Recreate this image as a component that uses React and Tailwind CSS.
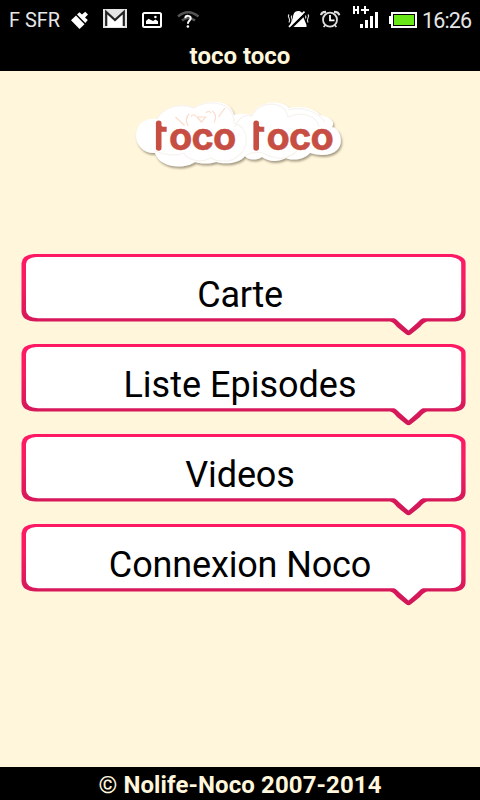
import React from "react";

function StatusBar() {
  return (
    <div className="relative h-10 w-full bg-black text-white">
      <svg className="block" width="480" height="40" viewBox="0 0 480 40" fill="none">
        <g fill="#e6e6e6" fontFamily="Roboto, sans-serif" fontSize="20">
          <text x="9" y="27" fontSize="19.5" textLength="51" lengthAdjust="spacingAndGlyphs">F SFR</text>
          <text x="422" y="28" fontSize="21.5" textLength="50">16:26</text>
        </g>
        {/* cleaning brush */}
        <g fill="#fff">
          <path d="M71 20.2 76 15.5 84.5 24.2 79.5 29Z" />
          <path d="M77 14.5 79.5 12.2 82 14.6 85.2 11.8 88 14.4 85 17.6 87.8 20 85.3 23Z" />
        </g>
        {/* mail */}
        <rect x="103" y="9" width="24" height="19" fill="#e4e4e4" />
        <path d="M107 12.5V27H123V12.5L115 21Z" fill="#fff" />
        <path d="M106.2 26V12L115 20 123.8 12V26" stroke="#222" strokeWidth="2.2" />
        {/* picture */}
        <rect x="143" y="13" width="18" height="14" rx="1.5" stroke="#fff" strokeWidth="2" />
        <path d="M146 24V21L148.5 18.8 151 20 153 21 155.5 19.5 158 21.2V24Z" fill="#fff" />
        <circle cx="155.4" cy="17" r="1.3" fill="#fff" />
        {/* wifi with question mark */}
        <g stroke="#555" strokeWidth="2.6">
          <path d="M178 16.5Q188 8 198.5 16.5" />
          <path d="M182 20.5Q188 15.5 195 20.5" />
        </g>
        <path d="M185.3 18.2C185.5 15 190.8 15.2 190.7 18.2C190.7 20.5 187.8 20.6 187.9 23.8" stroke="#fff" strokeWidth="2" />
        <circle cx="187.9" cy="26.5" r="1.3" fill="#fff" />
        {/* muted bell */}
        <path d="M298 11C301.5 11 303.3 13.5 303.5 17.5L306.5 25V27H290V25L292.8 18.5C293 14 294.5 11 298 11Z" fill="#fff" />
        <path d="M290.5 28 306.5 12.5" stroke="#000" strokeWidth="2.6" />
        <path d="M289 26.8 304.5 11.6" stroke="#fff" strokeWidth="1.7" />
        <path d="M289 14.5Q287.7 16 289 18T289 22.5M291.8 15.5Q290.8 17 291.8 18.5T291.8 21.5M308 14.5Q309.3 16 308 18T308 22.5M305.4 15.5Q306.4 17 305.4 18.5" stroke="#ddd" strokeWidth="1.2" />
        {/* alarm */}
        <circle cx="330" cy="19.7" r="7" stroke="#ddd" strokeWidth="1.8" />
        <path d="M330 15V20.3H334.5" stroke="#fff" strokeWidth="1.8" />
        <path d="M321 15.2Q321.5 11.8 326 11.8M334 11.8Q338.7 11.8 339.3 15.2" stroke="#ddd" strokeWidth="2.2" />
        <path d="M325.4 25 323.6 27M334.6 25 336.4 27" stroke="#ddd" strokeWidth="1.8" />
        {/* mobile data and signal strength */}
        <path d="M354 6V14M358 6V14M354 10H358M361 10H369M365 6V14" stroke="#fff" strokeWidth="2" />
        <path d="M360 24h3v4h-3zM365 20h3V28h-3zM370 16h3v12h-3zM375 12h3v16h-3z" fill="#fff" />
        {/* battery */}
        <path d="M389 16h2v-4h26v16h-26v-4h-2z" fill="#fff" />
        <path d="M393 14h22v12h-22z" fill="#000" />
        <path d="M394 15h20v10h-20z" fill="#68e817" />
      </svg>
    </div>
  );
}

function Logo() {
  return (
    <svg className="mx-auto block" width="230" height="85" viewBox="125 90 230 85">
      <defs>
        <filter id="shadow" x="-10%" y="-10%" width="120%" height="130%">
          <feDropShadow dx="1.2" dy="2" stdDeviation="1" floodColor="#776c55" floodOpacity=".65" />
        </filter>
        <clipPath id="trim">
          <path d="M157 126H180V131.8H157Z" />
        </clipPath>
      </defs>
      <g fill="#fff" filter="url(#shadow)">
        <path d="M155 153C145 154 136 146 136 136C136 124 145 117 157 119C164 106 182 103 194 108C204 100 230 97 234 115C241 113 247 114 252 115C258 101 281 99 289 108C303 105 315 109 320 115C332 117 335 123 332 127C341 129 344 144 337 150C331 156 320 156 310 153C304 160 292 161 286 158C277 163 267 161 262 157C256 161 247 160 245 156C240 163 226 165 216 162C207 165 198 163 195 162C186 169 160 169 155 153Z" />
      </g>
      <g fill="none" stroke="#f7f3ef" strokeWidth="1.2">
        <path d="M157 119C164 106 182 103 194 108C204 100 234 99 234 123C249 127 250 148 238 156C229 165 214 160 211 158C198 165 184 157 184 153C175 157 162 154 155 151" />
        <path d="M235 127C239 117 245 114 252 116C258 101 285 99 288 117C301 111 317 115 319 127M288 110C303 106 318 112 325 122M246 155C260 149 267 155 267 155C280 161 291 158 299 149" />
      </g>
      <g fill="none" stroke="#fbdccb" strokeWidth="1.2">
        <path d="M175.5 117 184.5 125.5M225 108 218.5 117M189 114Q184 120 188.5 126M212.5 111Q218 116 214 122.5M191 116.5Q193.5 113 196 116.5M206 113Q208.5 109.5 211 113M197 117H205.5L201.5 122Z" />
      </g>
      {[0, 97.5].map((dx) => (
        <g key={dx} transform={`translate(${dx} 0)`} fill="#c64e43" stroke="#c64e43" fontFamily="Inter, sans-serif" fontWeight="700">
          <g clipPath="url(#trim)" strokeWidth=".5">
            <text x="151.8" y="151" fontSize="44">t</text>
          </g>
          <path d="M158.7 123.4V148" strokeWidth="5.6" strokeLinecap="round" />
          <text x="168.9 191.6 213" y="150.2" fontSize="38" strokeWidth=".5">oco</text>
        </g>
      ))}
    </svg>
  );
}

function MenuButton({ label, id, labelClass }) {
  return (
    <button className="relative block h-[90px] w-full">
      <svg className="absolute left-[20px] top-0" width="448" height="84" viewBox="20 0 448 84" fill="none">
        <defs>
          <linearGradient id={id} x1="0" y1="0" x2="0" y2="82" gradientUnits="userSpaceOnUse">
            <stop stopColor="#ff1964" />
            <stop offset=".35" stopColor="#f81b63" />
            <stop offset=".8" stopColor="#d7185a" />
            <stop offset="1" stopColor="#d1185a" />
          </linearGradient>
        </defs>
        <path
          d="M34 0H452Q465.6 2 465.6 9V58Q465.6 67.5 452 67.6H427C424 68.5 422 71 420 73L411 80.3Q408.5 82 406 80.3L397 73C395 71 393 68 390 67.6H36Q21.5 67 21.5 57V9Q22 1 34 0Z"
          fill={`url(#${id})`}
        />
        <path
          d="M36 3H451Q461.2 4.5 461.2 10V57Q461.2 64 450 64.2H424C421 64.2 419 67 417 69L408.5 76.6L400 69C398 67 396 64.2 393 64.2H38Q26 63.5 26 56V10Q26.2 4 36 3Z"
          fill="#fff"
        />
      </svg>
      <span className={"relative block h-[90px] text-center font-['Roboto',sans-serif] text-[36px] leading-[82px] text-black " + labelClass}>
        {label}
      </span>
    </button>
  );
}

export default function App() {
  return (
    <div className="flex h-[800px] w-[480px] flex-col overflow-hidden bg-[#fff6dc]">
      <StatusBar />
      <header className="h-[31px] bg-black text-center font-['Roboto',sans-serif] text-[24px] font-bold leading-[33px] text-[#fff6dc]">
        toco toco
      </header>
      <main className="flex-1 pt-[19px]">
        <Logo />
        <nav className="mt-[79px]">
          <MenuButton id="edge-carte" label="Carte" labelClass="tracking-[-0.3px]" />
          <MenuButton id="edge-episodes" label="Liste Episodes" labelClass="tracking-normal" />
          <MenuButton id="edge-videos" label="Videos" labelClass="tracking-[-0.1px]" />
          <MenuButton id="edge-noco" label="Connexion Noco" labelClass="tracking-[-0.15px]" />
        </nav>
      </main>
      <footer className="h-[33px] bg-black text-center font-['Roboto',sans-serif] text-[24px] font-bold leading-[36px] tracking-[0.1px] text-[#fff6dc]">
        © Nolife-Noco 2007-2014
      </footer>
    </div>
  );
}
